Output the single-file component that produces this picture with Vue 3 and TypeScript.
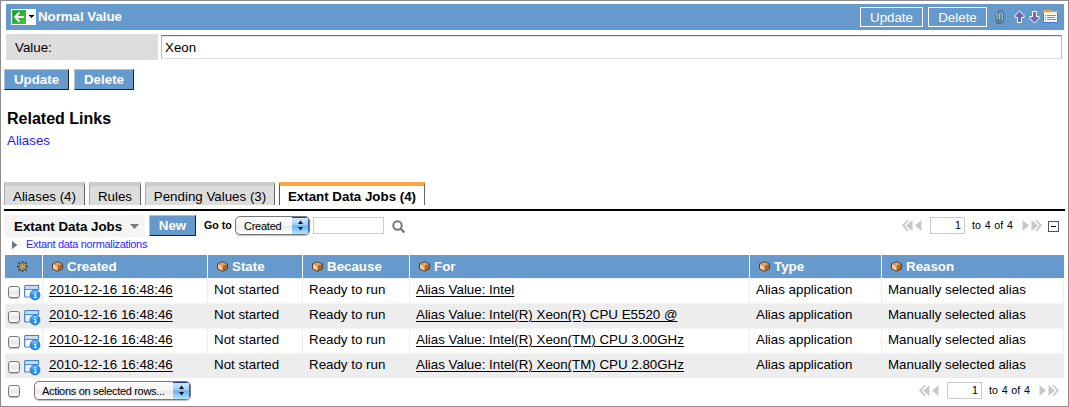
<script setup lang="ts">
interface Tab { label: string; width: number; active?: boolean }
interface Job { created: string; target: string }

const tabs: Tab[] = [
  { label: 'Aliases (4)', width: 81 },
  { label: 'Rules', width: 52 },
  { label: 'Pending Values (3)', width: 130 },
  { label: 'Extant Data Jobs (4)', width: 146, active: true },
]
const columns: string[] = ['Created', 'State', 'Because', 'For', 'Type', 'Reason']
const jobs: Job[] = [
  { created: '2010-12-16 16:48:46', target: 'Alias Value: Intel' },
  { created: '2010-12-16 16:48:46', target: 'Alias Value: Intel(R) Xeon(R) CPU E5520 @' },
  { created: '2010-12-16 16:48:46', target: 'Alias Value: Intel(R) Xeon(TM) CPU 3.00GHz' },
  { created: '2010-12-16 16:48:46', target: 'Alias Value: Intel(R) Xeon(TM) CPU 2.80GHz' },
]
</script>

<template>
  <main class="page">
    <header class="title-bar">
      <div class="back">
        <svg width="25" height="16" viewBox="0 0 25 16">
          <defs>
            <linearGradient id="green" x1="0" y1="0" x2="1" y2="1">
              <stop offset="0" stop-color="#129b24" /><stop offset="1" stop-color="#48c744" />
            </linearGradient>
          </defs>
          <rect width="25" height="16" fill="#fff" />
          <rect x="1.5" y="1.5" width="13" height="13" fill="url(#green)" stroke="#45b64c" />
          <path d="M13 8H4.500M8.500 3.500L4 8l4.500 4.500" fill="none" stroke="#fff" stroke-width="1.900" />
          <path d="M18 6h5v1h-1v1h-1v1h-1V8h-1V7h-1z" fill="#000" />
        </svg>
      </div>
      <h1>Normal Value</h1>
      <button class="ghost upd">Update</button>
      <button class="ghost del">Delete</button>
      <svg class="bar-icons" width="64" height="18" viewBox="0 0 64 18">
        <path d="M1 6V12Q2 15.500 4.500 15.500T8.500 12V5.500Q8 2.500 5.500 2.500T3 5V11Q3 13 4.500 13T6.200 11V6" fill="none" stroke="#4d6c76" stroke-width="1.200" />
        <path d="M2 5.500V11.500M7.300 5V12M4.600 5.500V11" fill="none" stroke="#c3ccc0" stroke-width=".9" />
        <path d="M24.500 2.900L29 7.500V9.500H26.500V14.500H22.500V9.500H20V7.500z" fill="#7166b8" stroke="#fff" />
        <path d="M39.500 15.100L44 10.500V8.500H41.500V3.500H37.500V8.500H35V10.500z" fill="#7166b8" stroke="#fff" />
        <rect x="48" y="3" width="15" height="12" fill="#fff" />
        <path d="M48 2h8l1.500 1H62v2H48z" fill="#f2a448" />
        <path d="M49 4h13v1H49z" fill="#ffe1a4" />
        <path d="M48.500 5V14.500H62.500V4" fill="none" stroke="#3f79e7" />
        <path d="M50 7.500h1M52 7.500h9M50 9.500h1M52 9.500h8M50 11.500h1M52 11.500h9" stroke="#6790d0" />
      </svg>
    </header>

    <section class="field">
      <label for="value">Value:</label>
      <input id="value" class="value" value="Xeon" />
    </section>

    <div class="actions">
      <button class="solid">Update</button>
      <button class="solid">Delete</button>
    </div>

    <section class="related">
      <h2>Related Links</h2>
      <a>Aliases</a>
    </section>

    <nav class="tabs">
      <div v-for="tab in tabs" :key="tab.label" class="tab" :class="{ active: tab.active }" :style="{ width: tab.width + 'px' }">
        {{ tab.label }}
      </div>
    </nav>

    <div class="toolbar">
      <div class="list-title">
        <span>Extant Data Jobs</span>
        <svg width="9" height="5" viewBox="0 0 9 5"><path d="M0 0H9L4.500 5z" fill="#777" /></svg>
      </div>
      <button class="solid new">New</button>
      <span class="goto">Go to</span>
      <div class="select created">
        <span>Created</span>
        <i><svg width="7" height="11" viewBox="0 0 7 11"><path d="M1 4L3.500 0.500 6 4zM1 7L3.500 10.500 6 7z" fill="#111" /></svg></i>
      </div>
      <input class="search" aria-label="Search" />
      <svg class="magnifier" width="14" height="14" viewBox="0 0 14 14">
        <circle cx="5.500" cy="5.500" r="4.200" fill="none" stroke="#777" stroke-width="2" />
        <path d="M8.500 8.500L12.300 12.500" stroke="#777" stroke-width="2.300" />
      </svg>
      <div class="pager">
        <svg width="20" height="11" viewBox="0 0 20 11"><path d="M5 0H7L2.500 5.500 7 11H5L0 5.500zM10.500 0v11L4 5.500zM19.500 0v11L13 5.500z" fill="#c8c8c8" /></svg>
        <span class="num">1</span><span class="range">to 4 of 4</span>
        <svg width="20" height="11" viewBox="0 0 20 11"><path d="M.5 0v11L7 5.500zM9.500 0v11L16 5.500zM13 0h2L20 5.500 15 11H13l4.500-5.500z" fill="#c8c8c8" /></svg>
      </div>
      <svg class="collapse" width="11" height="11" viewBox="0 0 11 11"><rect x=".5" y=".5" width="10" height="10" fill="#fff" stroke="#555" /><path d="M3 5.500H8" stroke="#000" /></svg>
    </div>

    <div class="crumb">
      <svg width="6" height="8" viewBox="0 0 6 8"><path d="M0 0L5.500 4 0 8z" fill="#667987" /></svg>
      <a>Extant data normalizations</a>
    </div>

    <div class="grid">
      <div class="row head">
        <div class="cell gear">
          <svg width="11" height="11" viewBox="0 0 11 11">
            <path d="M5.500 0V11M0 5.500H11M1.500 1.500L9.500 9.500M9.500 1.500L1.500 9.500" stroke="#49310f" stroke-width="1.400" />
            <circle cx="5.500" cy="5.500" r="3.400" fill="#f0bd5c" stroke="#6b4916" stroke-width=".7" />
            <circle cx="5.500" cy="5.500" r="1.600" fill="#fff0bd" stroke="#3d2b14" stroke-width=".8" />
          </svg>
        </div>
        <div v-for="column in columns" :key="column" class="cell">
          <svg width="11" height="11" viewBox="0 0 11 11">
            <path d="M.5 2.800L5.500 .7 10.500 2.800V7.800L5.500 10.300.5 7.800z" fill="#a8692f" stroke="#4c2d15" stroke-width=".8" />
            <path d="M1 3L5.500 1.200 10 3 5.500 5z" fill="#dca36b" />
            <path d="M1 3.300L5.500 5.300V9.800L1 7.600z" fill="#ffcb94" />
          </svg>
          {{ column }}
        </div>
      </div>
      <div v-for="(job, index) in jobs" :key="index" class="row body">
        <div class="cell tools">
          <span class="check"></span>
          <svg width="17" height="16" viewBox="0 0 17 16">
            <path d="M.7 12V1.500Q.7 .7 1.500 .7H14.500V5M.7 12H6" fill="none" stroke="#477fca" stroke-width="1.200" />
            <path d="M1.500 1.500H14V4H1.500z" fill="#bcdfff" /><path d="M1 4.500H14" stroke="#4b8edc" />
            <circle cx="11" cy="10" r="5" fill="#298fe8" stroke="#1768bd" stroke-width=".7" />
            <ellipse cx="10.500" cy="7.500" rx="3.500" ry="2" fill="#74c4ff" opacity=".6" />
            <path d="M10.500 7h1.500M10 9.500h1.500V12.500M9.700 12.500h3" fill="none" stroke="#fff" stroke-width="1.200" />
          </svg>
        </div>
        <div class="cell"><a>{{ job.created }}</a></div>
        <div class="cell">Not started</div>
        <div class="cell">Ready to run</div>
        <div class="cell"><a>{{ job.target }}</a></div>
        <div class="cell">Alias application</div>
        <div class="cell">Manually selected alias</div>
      </div>
    </div>

    <footer>
      <span class="check"></span>
      <div class="select rows">
        <span>Actions on selected rows...</span>
        <i><svg width="7" height="11" viewBox="0 0 7 11"><path d="M1 4L3.500 0.500 6 4zM1 7L3.500 10.500 6 7z" fill="#111" /></svg></i>
      </div>
      <div class="pager">
        <svg width="20" height="11" viewBox="0 0 20 11"><path d="M5 0H7L2.500 5.500 7 11H5L0 5.500zM10.500 0v11L4 5.500zM19.500 0v11L13 5.500z" fill="#c8c8c8" /></svg>
        <span class="num">1</span><span class="range">to 4 of 4</span>
        <svg width="20" height="11" viewBox="0 0 20 11"><path d="M.5 0v11L7 5.500zM9.500 0v11L16 5.500zM13 0h2L20 5.500 15 11H13l4.500-5.500z" fill="#c8c8c8" /></svg>
      </div>
    </footer>
  </main>
</template>

<style>
body { overflow: hidden; background: #fff; }
</style>

<style scoped>
* { box-sizing: border-box; }
svg { display: block; flex: none; }
.page { width: 1069px; height: 407px; border: 1px solid #8d8d8d; padding: 3px 3px 0; background: #fff; color: #000; font: 13.33px "Liberation Sans", Arial, sans-serif; white-space: nowrap; overflow: hidden; }
h1, h2 { margin: 0; }
button, input { font: inherit; margin: 0; padding: 0; border-radius: 0; }
.title-bar { height: 26px; margin: 0 1px 0 2px; padding: 0 5px; display: flex; align-items: center; background: #69c; color: #fff; }
h1 { margin: 0 auto 0 2px; font-size: 13.33px; line-height: 26px; letter-spacing: -.05px; }
.ghost { height: 20px; border: 1px solid #fff; background: #69c; color: #fff; line-height: 19px; }
.upd { width: 63px; }
.del { width: 59px; margin-left: 5px; }
.bar-icons { margin-left: 8px; }
.field { height: 26px; margin: 4px 2px 0; display: flex; align-items: center; }
.field label { width: 152px; height: 26px; padding-left: 9px; line-height: 27px; background: #ddd; }
.value { width: 901px; height: 24px; margin-left: 3px; padding: 1px 3px 0; border: 1px solid #bbb; border-top: 1px solid #777; border-bottom-color: #ddd; outline: none; box-shadow: inset 0 1px #e3e3e3; }
.actions { display: flex; gap: 5px; margin-top: 9px; }
.solid { height: 21px; width: 65px; border: 1px solid #a9c6df; border-right-color: #222; border-bottom-color: #222; background: #69c; color: #fff; font-weight: bold; line-height: 20px; }
.solid + .solid { width: 60px; }
.related { height: 92px; padding: 19px 0 0 3px; }
h2 { font-size: 16px; line-height: 20px; }
a { color: #000; text-decoration: underline; text-underline-offset: 2px; text-decoration-thickness: 1px; }
.related a { display: block; margin-top: 4px; line-height: 16px; color: #1a1aff; text-decoration: none; }
.tabs { display: flex; gap: 4px; height: 23px; }
.tab { border: solid #aaa; border-top-color: #ccc; border-right-color: #666; border-width: 4px 1px 0; background: #ddd; text-align: center; line-height: 21px; }
.tab.active { background: #fff; border-top-color: #ffa53f; border-left-color: #555; font-weight: bold; }
.toolbar { height: 28px; margin-top: 4px; border-top: 2px solid #000; display: flex; align-items: flex-start; }
.list-title { width: 141px; height: 22px; margin-top: 4px; padding: 0 6px 0 10px; display: flex; align-items: center; justify-content: space-between; font-weight: bold; background: #f4f4f4; border-radius: 2px; }
.new { width: 47px !important; margin: 4px 0 0 4px; }
.goto { width: 31px; margin-left: 8px; font-size: 10.67px; font-weight: bold; line-height: 29px; }
.select { height: 19px; border: 1px solid #777; border-radius: 5px; display: flex; align-items: center; overflow: hidden; background: linear-gradient(#fff, #f4f4f4 50%, #e8e8e8 51%, #fff); box-shadow: 0 1px 1px #bbb; font-size: 11px; }
.select span { flex: 1; padding-left: 8px; }
.select i { width: 17px; height: 17px; flex: none; display: flex; align-items: center; justify-content: center; background: linear-gradient(#d8ecff, #9cccf5 48%, #65b0ee 52%, #b5e4ff); box-shadow: inset 0 1px #25458e, inset -1px 0 #3360a9; }
.created { width: 75px; margin-top: 5px; letter-spacing: -.25px; }
.search { width: 71px; height: 17px; margin: 6px 0 0 3px; border: 1px solid #ccc; outline: none; }
.magnifier { margin: 9px 0 0 8px; }
.pager { display: flex; align-items: center; height: 18px; margin-left: auto; font-size: 10.67px; }
.toolbar .pager { margin-top: 5px; }
.num { width: 35px; height: 17px; margin-left: 8px; padding-right: 3px; border: 1px solid #ccc; line-height: 15px; text-align: right; }
.range { width: 57px; padding-left: 7px; word-spacing: .8px; }
.collapse { margin: 10px 6px 0 6px; }
.crumb { height: 18px; padding: 0 0 3px 8px; display: flex; align-items: center; gap: 8px; font-size: 11px; line-height: 13px; letter-spacing: -.33px; }
.crumb a { margin-top: -1px; color: #2b2bff; text-decoration: none; }
.grid { margin-left: 1px; width: 1059px; }
.row { display: grid; grid-template-columns: 38px 165px 95px 107px 340px 132px 182px; height: 25px; }
.cell { padding-left: 6px; border-right: 1px solid #eee; line-height: 22px; }
.head { height: 23px; background: #69c; color: #fff; font-weight: bold; }
.head .cell { display: flex; align-items: center; gap: 4px; height: 23px; padding-left: 9px; line-height: 25px; border-color: #fff; }
.head .cell:last-child { border: 0; }
.head .gear { padding-left: 12px; }
.body:nth-child(odd) { background: #ededed; }
.body .cell { border-top: 1px solid #f5f5f5; }
.tools { display: flex; align-items: flex-start; padding: 6px 0 0 3px; gap: 4px; }
.check { width: 12px; height: 12px; border: 1px solid #777; border-radius: 3px; background: linear-gradient(#fff, #e5e5e5 60%, #fff); box-shadow: 0 1px 1px #bbb; flex: none; }
.tools .check { margin-top: 1px; }
footer { height: 28px; padding: 3px 6px 0 4px; display: flex; align-items: flex-start; }
footer .check { margin-top: 4px; }
.rows { width: 157px; margin-left: 14px; letter-spacing: -.31px; }
.rows span { padding-left: 7px; }
</style>
